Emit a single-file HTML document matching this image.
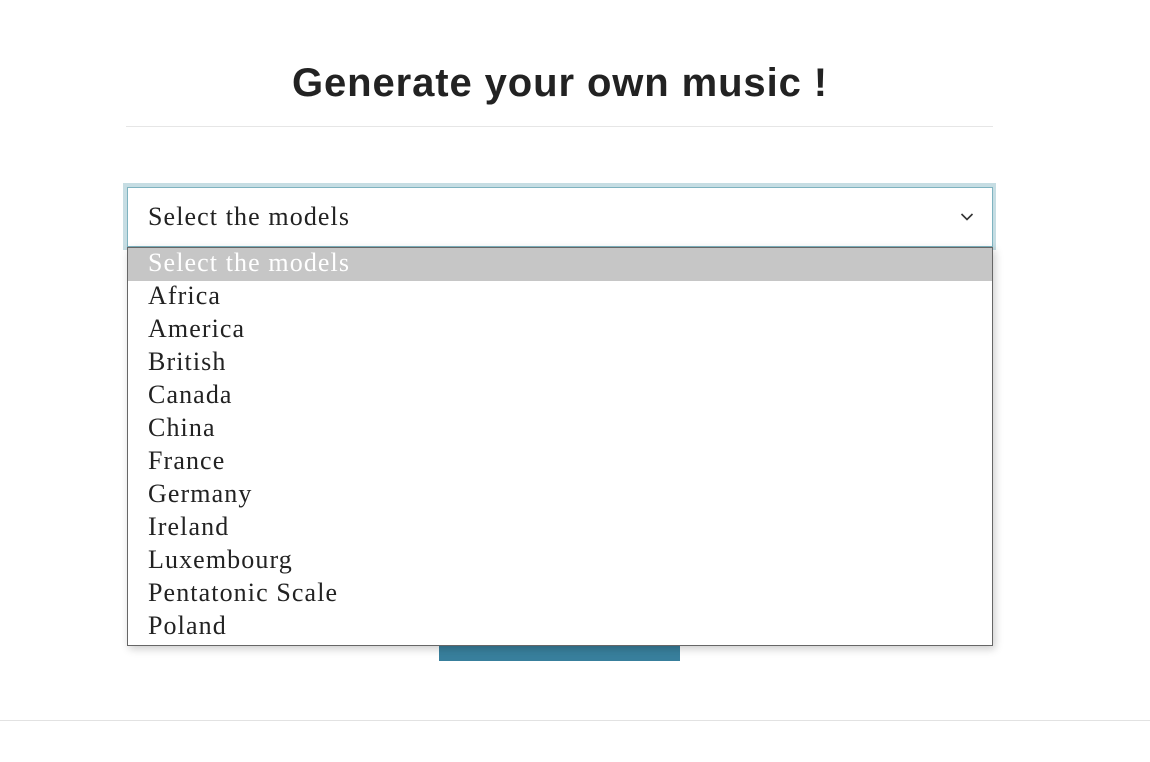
<!DOCTYPE html>
<html><head><meta charset="utf-8"><style>
html,body{margin:0;width:1150px;height:762px;background:#fff;overflow:hidden;position:relative}
h1{position:absolute;left:0;width:1120px;top:61px;margin:0;text-align:center;font:bold 40px "Liberation Sans",sans-serif;color:#222;letter-spacing:0.9px}
.hr1{position:absolute;left:126px;width:867px;top:126px;height:1px;background:#e6e6e6}
.focus{position:absolute;left:123px;top:183px;width:873px;height:67px;background:#c6dde3}
.sel{position:absolute;left:127px;top:187px;height:60px;background:#fff;border:1px solid #7fb3c0;box-sizing:border-box;width:866px}
.sel span{position:absolute;left:20px;top:14px;font:26px "Liberation Serif",serif;color:#222;letter-spacing:1.1px}
.sel svg{position:absolute;right:18px;top:24px}
.btn{position:absolute;left:439px;top:640px;width:241px;height:21px;background:#387f9c}
.list{position:absolute;left:127px;top:247px;width:866px;height:399px;box-sizing:border-box;border:1px solid #666;background:#fff;box-shadow:2px 3px 8px rgba(0,0,0,.2)}
.list div{height:33px;line-height:37px;padding-left:20px;font:26px "Liberation Serif",serif;color:#222;letter-spacing:1.1px}
.list div.h{background:#c6c6c6;color:#fff}
.hr2{position:absolute;left:0;width:1150px;top:720px;height:1px;background:#e2e2e2}
</style></head><body>
<h1>Generate your own music !</h1>
<div class="hr1"></div>
<div class="focus"></div>
<div class="sel"><span>Select the models</span><svg width="14" height="10" viewBox="0 0 14 10"><path d="M1.5 2l5.5 5.5 5.5-5.5" fill="none" stroke="#333" stroke-width="1.6"/></svg></div>
<div class="btn"></div>
<div class="list">
<div class="h">Select the models</div><div>Africa</div><div>America</div><div>British</div><div>Canada</div><div>China</div><div>France</div><div>Germany</div><div>Ireland</div><div>Luxembourg</div><div>Pentatonic Scale</div><div>Poland</div>
</div>
<div class="hr2"></div>
</body></html>
